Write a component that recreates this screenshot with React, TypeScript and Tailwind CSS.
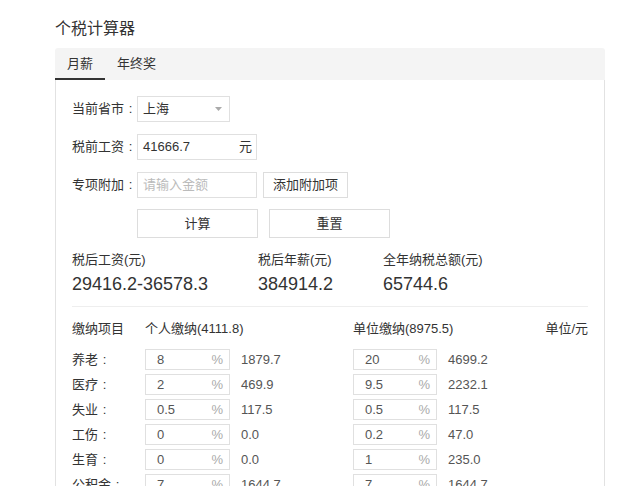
import React from "react";

const font = { fontFamily: '"Liberation Sans", "Noto Sans CJK SC", sans-serif' };

const rows = [
  { name: "养老", p: "8", pa: "1879.7", c: "20", ca: "4699.2" },
  { name: "医疗", p: "2", pa: "469.9", c: "9.5", ca: "2232.1" },
  { name: "失业", p: "0.5", pa: "117.5", c: "0.5", ca: "117.5" },
  { name: "工伤", p: "0", pa: "0.0", c: "0.2", ca: "47.0" },
  { name: "生育", p: "0", pa: "0.0", c: "1", ca: "235.0" },
  { name: "公积金", p: "7", pa: "1644.7", c: "7", ca: "1644.7" },
];

// full-width colon drawn centred in its cell, as the original font does
const Colon = () => <span className="inline-block w-[13px] text-center">:</span>;

const Rate = ({ value, w }: { value: string; w: string }) => (
  <div className={`flex h-[21px] ${w} items-center justify-between border border-[#e0e0e0] pl-[11px] pr-[6px] text-[#555]`}>
    <span>{value}</span>
    <span className="text-[#aaa]">%</span>
  </div>
);

const App = () => {
  return (
    <div style={font} className="min-h-[486px] bg-white pl-[55px] pt-[18px] text-[13px] text-[#333]">
      <h1 className="text-[16px] leading-[22px] text-[#333]">个税计算器</h1>

      <div className="mt-[8px] w-[550px]">
        {/* tabs */}
        <div className="flex h-[32px] rounded-t-[3px] bg-[#f4f4f4]">
          <div className="flex items-center border-b-2 border-[#333] px-3 pt-[2px]">月薪</div>
          <div className="flex items-center px-3">年终奖</div>
        </div>

        <div className="border-x border-[#e2e2e2] px-4 pt-4 pb-10">
          {/* form */}
          <div className="flex h-[26px] items-center">
            <span className="w-[65px]">当前省市<Colon /></span>
            <div className="flex h-[26px] w-[93px] items-center justify-between border border-[#e0e0e0] pl-[5px] pr-[7px]">
              <span>上海</span>
              <svg width="7" height="4" viewBox="0 0 7 4">
                <path d="M0 0 L7 0 L3.5 4 Z" fill="#aaa" />
              </svg>
            </div>
          </div>

          <div className="mt-[12px] flex h-[26px] items-center">
            <span className="w-[65px]">税前工资<Colon /></span>
            <div className="flex h-[26px] w-[120px] items-center justify-between border border-[#e0e0e0] pl-[5px] pr-[4px]">
              <span>41666.7</span>
              <span>元</span>
            </div>
          </div>

          <div className="mt-[12px] flex h-[26px] items-center">
            <span className="w-[65px]">专项附加<Colon /></span>
            <div className="flex h-[26px] w-[120px] items-center border border-[#e0e0e0] pl-[5px] text-[#bbb]">
              请输入金额
            </div>
            <button className="ml-[6px] h-[26px] w-[85px] border border-[#ddd] bg-white text-[#333]">添加附加项</button>
          </div>

          <div className="mt-[11px] flex pl-[65px]">
            <button className="h-[29px] w-[121px] border border-[#ddd] bg-white">计算</button>
            <button className="ml-[11px] h-[29px] w-[121px] border border-[#ddd] bg-white">重置</button>
          </div>

          {/* results */}
          <div className="mt-[12px] flex border-b border-[#eee] pb-[10px]">
            <div className="w-[186px]">
              <div className="leading-[20px]">税后工资(元)</div>
              <div className="mt-[2px] text-[18px] leading-[24px]">29416.2-36578.3</div>
            </div>
            <div className="w-[125px]">
              <div className="leading-[20px]">税后年薪(元)</div>
              <div className="mt-[2px] text-[18px] leading-[24px]">384914.2</div>
            </div>
            <div>
              <div className="leading-[20px]">全年纳税总额(元)</div>
              <div className="mt-[2px] text-[18px] leading-[24px]">65744.6</div>
            </div>
          </div>

          {/* table */}
          <div className="mt-[12px] flex leading-[20px]">
            <span className="w-[73px]">缴纳项目</span>
            <span className="w-[208px]">个人缴纳(4111.8)</span>
            <span className="flex-1">单位缴纳(8975.5)</span>
            <span>单位/元</span>
          </div>

          <div className="mt-[8px]">
            {rows.map((r) => (
              <div key={r.name} className="flex h-[25px] items-center">
                <span className="w-[73px]">{r.name}<Colon /></span>
                <Rate value={r.p} w="w-[85px]" />
                <span className="ml-[11px] w-[112px] text-[#555]">{r.pa}</span>
                <Rate value={r.c} w="w-[84px]" />
                <span className="ml-[11px] text-[#555]">{r.ca}</span>
              </div>
            ))}
          </div>
        </div>
      </div>
    </div>
  );
};

export default App;
